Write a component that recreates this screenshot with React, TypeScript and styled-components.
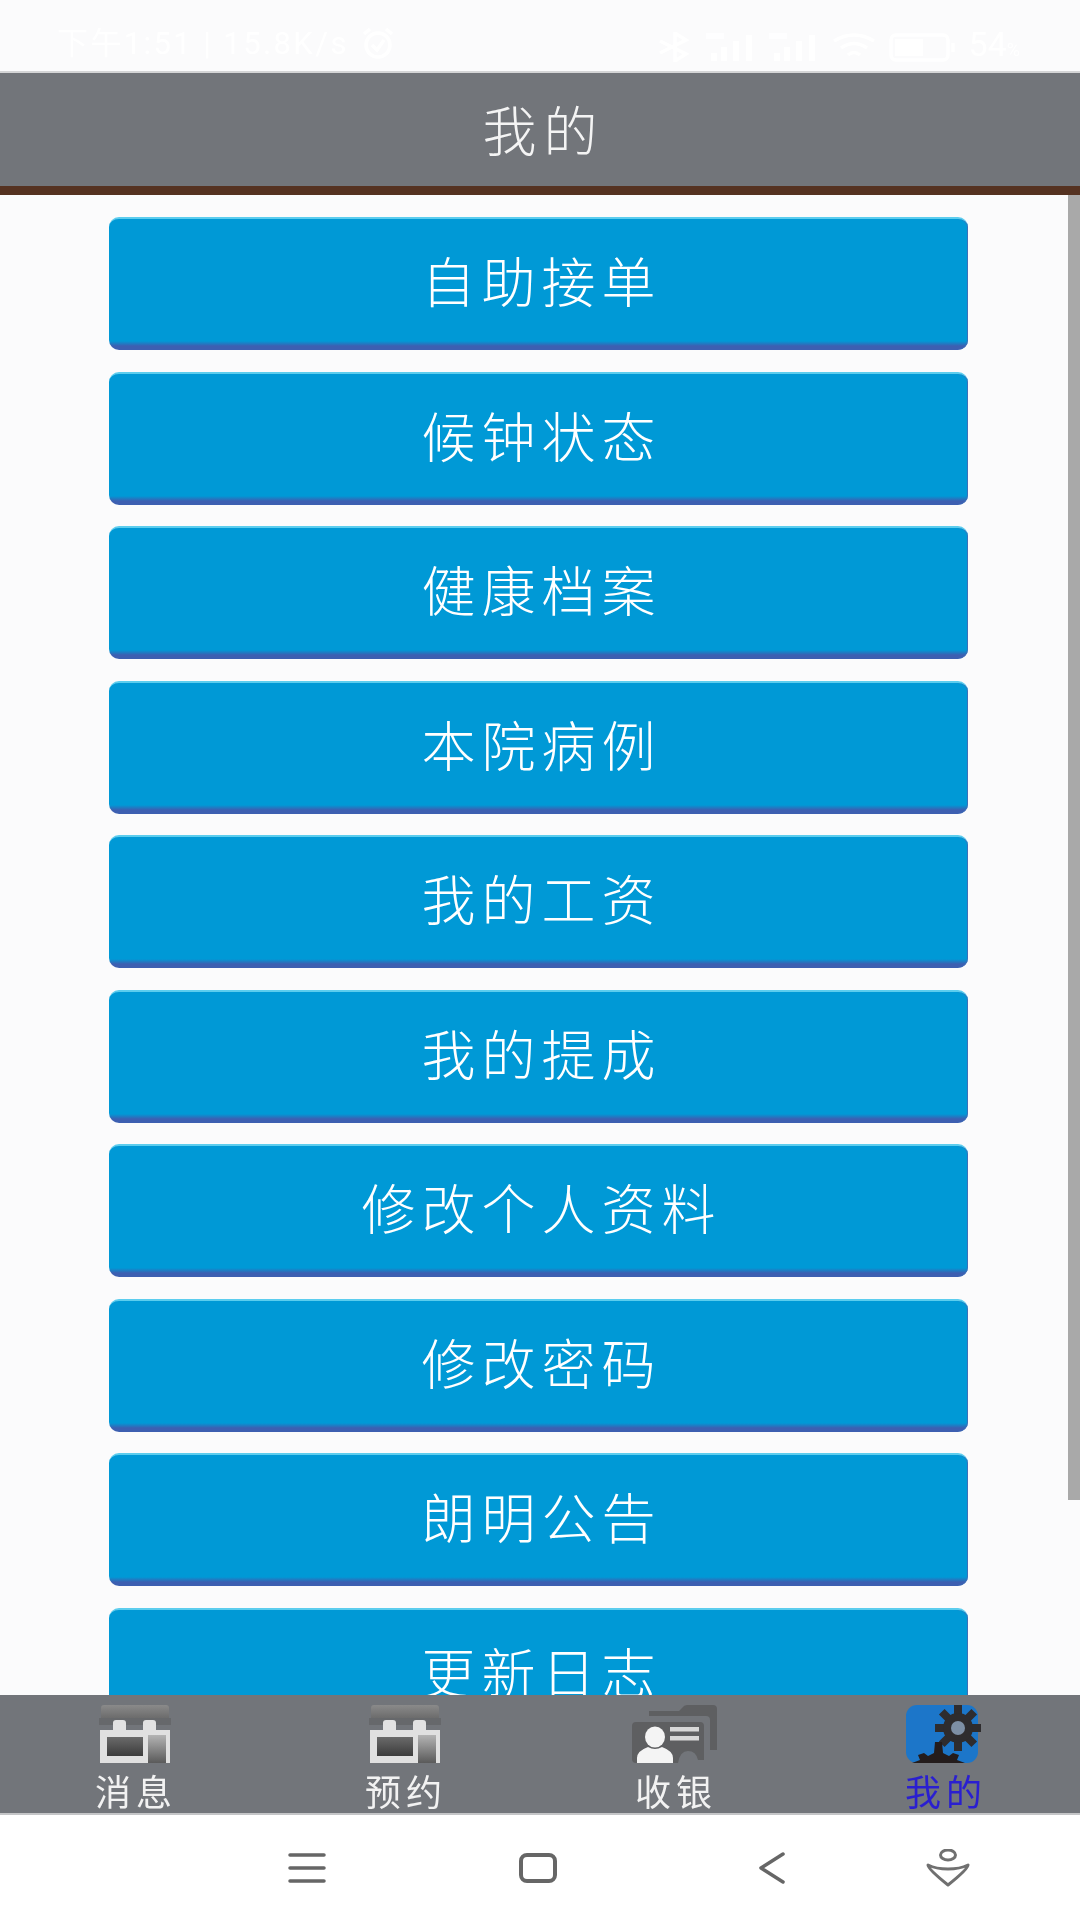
import React from 'react'
import styled, { createGlobalStyle } from 'styled-components'

const CJK = `"Noto Sans CJK SC", "Noto Sans", sans-serif`

const GlobalStyle = createGlobalStyle`
  html, body {
    margin: 0;
    padding: 0;
    background: #fbfbfc;
  }
  body {
    font-family: ${CJK};
  }
`

const Screen = styled.div`
  width: 1080px;
  height: 1920px;
  display: flex;
  flex-direction: column;
  overflow: hidden;
  background: #fbfbfc;
  filter: blur(0.6px);
`

const StatusBar = styled.div`
  height: 73px;
  flex: none;
  box-sizing: border-box;
  padding: 26px 60px 0 57px;
  display: flex;
  justify-content: space-between;
  align-items: flex-start;
  color: #ffffff;
  font-family: "Roboto", ${CJK};
  font-size: 31px;
  line-height: 36px;
  border-bottom: 2px solid #d4d5d6;
`

const StatusLeft = styled.div`
  display: flex;
  align-items: center;
  gap: 12px;
  letter-spacing: 2.4px;
`

const StatusRight = styled.div`
  display: flex;
  align-items: center;
  gap: 13px;
`

const Percent = styled.span`
  font-size: 34px;
  line-height: 36px;

  small {
    font-size: 18px;
  }
`

const Header = styled.header`
  flex: none;
  height: 122px;
  box-sizing: border-box;
  background: #72757a;
  border-bottom: 9px solid #553221;
  display: flex;
  align-items: center;
  justify-content: center;
  color: #f4f4f4;
  font-size: 54px;
  font-weight: 300;
  letter-spacing: 7px;
  padding: 0 0 2px 7px;
`

const Body = styled.div`
  position: relative;
  flex: 1;
  min-height: 0;
  overflow: hidden;
`

const ButtonList = styled.div`
  display: flex;
  flex-direction: column;
  gap: 21.5px;
  padding: 22px 112px 0 109px;
`

const MenuButton = styled.button`
  flex: none;
  height: 133px;
  border: 0;
  border-top: 2px solid #5ccdee;
  border-radius: 10px;
  background: linear-gradient(to bottom, #0099d6 0, #0099d6 122px, #3d5fb1 127px, #3d5fb1 100%);
  color: #ffffff;
  font-family: ${CJK};
  font-size: 54px;
  font-weight: 300;
  letter-spacing: 6px;
  padding: 0 0 10px 6px;
  box-shadow: inset -1px 0 0 #3d6fb8;
`

const Scrollbar = styled.div`
  position: absolute;
  top: 0;
  right: 0;
  width: 12px;
  height: 1305px;
  background: #a9a9a9;
`

const TabBar = styled.nav`
  flex: none;
  height: 120px;
  box-sizing: border-box;
  background: #72757a;
  border-bottom: 2px solid #c4c5c7;
  display: grid;
  grid-template-columns: repeat(4, 1fr);
`

const Tab = styled.div`
  display: flex;
  flex-direction: column;
  align-items: center;
  padding-top: 10px;
`

const TabIcon = styled.div`
  height: 60px;
  display: flex;
  align-items: flex-start;
  justify-content: center;
`

const TabLabel = styled.span<{ $active?: boolean }>`
  font-size: 36px;
  line-height: 40px;
  margin-top: 5px;
  letter-spacing: 5px;
  padding-left: 2px;
  color: ${props => (props.$active ? '#2a1fd0' : '#f2f2f2')};
`

const NavBar = styled.div`
  flex: none;
  height: 105px;
  background: #ffffff;
  display: grid;
  grid-template-columns: 288px 38px 193px 38px 202px 26px 141px 44px;
  align-items: center;
`

const NavSlot = styled.div<{ $column: number }>`
  grid-column: ${props => props.$column};
  display: flex;
  justify-content: center;
`

const items = [
  '自助接单',
  '候钟状态',
  '健康档案',
  '本院病例',
  '我的工资',
  '我的提成',
  '修改个人资料',
  '修改密码',
  '朗明公告',
  '更新日志',
]

const ShopIcon = () => (
  <svg width="72" height="58" viewBox="0 0 72 58">
    <defs>
      <linearGradient id="shopTop" x1="0" y1="0" x2="0" y2="1">
        <stop offset="0" stopColor="#8a8a8a" />
        <stop offset="1" stopColor="#6c6c6c" />
      </linearGradient>
      <linearGradient id="shopDark" x1="0" y1="0" x2="0" y2="1">
        <stop offset="0" stopColor="#6a6a6a" />
        <stop offset="1" stopColor="#3c3c3c" />
      </linearGradient>
      <linearGradient id="shopDoor" x1="0" y1="0" x2="0" y2="1">
        <stop offset="0" stopColor="#b4b4b4" />
        <stop offset="1" stopColor="#5a5a5a" />
      </linearGradient>
    </defs>
    <path d="M2 3 q0-3 3-3 h62 q3 0 3 3 v10 h-68z" fill="url(#shopTop)" />
    <path d="M0 13 h72 v7 h-72z" fill="#66686b" />
    <path d="M14 26 v-8 q0-3 3-3 h7 q3 0 3 3 v8z M44 26 v-8 q0-3 3-3 h7 q3 0 3 3 v8z" fill="#e2e2e2" />
    <rect x="1" y="25" width="70" height="33" fill="#e0e0e0" />
    <rect x="8" y="32" width="36" height="19" fill="url(#shopDark)" />
    <rect x="49" y="30" width="18" height="28" fill="url(#shopDoor)" />
  </svg>
)

const CardIcon = () => (
  <svg width="86" height="60" viewBox="0 0 86 60">
    <path d="M17 6 h30 l3-3 q2-3 5-3 h26 q4 0 4 4 v41 h-7 v-30 q0-4-4-4 h-57z" fill="#5e5f61" />
    <path d="M4 17 h64 q4 0 4 4 v34 h-6 q-2-9-10-9 q-8 0-10 12 h-42 q-4 0-4-4 v-33 q0-4 4-4z" fill="#5e5f61" />
    <ellipse cx="23" cy="32" rx="10" ry="10.5" fill="#f4f4f4" />
    <path d="M5 58 v-5 q0-7 11-11 q7 4 14 0 q11 4 11 11 v5z" fill="#f4f4f4" />
    <rect x="38" y="22" width="29" height="4.5" fill="#d8d8d8" />
    <rect x="38" y="31" width="29" height="4.5" fill="#d8d8d8" />
  </svg>
)

const GearIcon = () => (
  <svg width="78" height="60" viewBox="0 0 78 60" style={{ overflow: 'visible' }}>
    <rect x="0" y="0" width="72" height="58" rx="11" fill="#1c76c9" />
    <g transform="translate(52 23)" fill="#2e2c2e">
      {[0, 45, 90, 135].map(angle => (
        <rect key={angle} x="-4" y="-23" width="8" height="46" transform={`rotate(${angle})`} />
      ))}
      <circle r="15" />
      <circle r="7" fill="#7d8fa5" />
    </g>
    <path
      d="M6 58 l8-3 l-2-5 l6-2 l4 3 l6-3 l1-11 h7 l1 11 l6 3 l4-3 l6 2 l-2 5 l8 3z"
      fill="#241c1c"
    />
  </svg>
)

const MenuGlyph = () => (
  <svg width="38" height="30" viewBox="0 0 38 30" fill="none" stroke="#666" strokeWidth="3.5" strokeLinecap="round">
    <path d="M2 2 H36 M2 15 H36 M2 28 H36" />
  </svg>
)

const HomeGlyph = () => (
  <svg width="38" height="30" viewBox="0 0 38 30" fill="none" stroke="#666" strokeWidth="4">
    <rect x="2" y="2" width="34" height="26" rx="6" />
  </svg>
)

const BackGlyph = () => (
  <svg width="26" height="32" viewBox="0 0 26 32" fill="none" stroke="#666" strokeWidth="3.5" strokeLinecap="round" strokeLinejoin="round">
    <path d="M24 2 L2 16 L24 30" />
  </svg>
)

const AssistGlyph = () => (
  <svg width="44" height="38" viewBox="0 0 44 38" fill="none" stroke="#707070" strokeWidth="3" strokeLinejoin="round">
    <ellipse cx="22" cy="6" rx="7.5" ry="5" />
    <path d="M2 16 Q10 20 22 20 Q34 20 42 16 Q42 20 22 36 Q2 20 2 16 Z" />
  </svg>
)

const AlarmGlyph = () => (
  <svg width="34" height="34" viewBox="0 0 34 34" fill="none" stroke="#fff" strokeWidth="3.5">
    <circle cx="17" cy="18" r="12" />
    <path d="M11 18 L16 23 L23 13" />
    <path d="M3 7 L9 2 M31 7 L25 2" />
  </svg>
)

const BluetoothGlyph = () => (
  <svg width="35" height="30" viewBox="0 0 35 30" fill="none" stroke="#fff" strokeWidth="3.5">
    <path d="M2 9 L28 22 L17 29 V1 L28 8 L2 21" />
  </svg>
)

const SignalGlyph = () => (
  <svg width="50" height="28" viewBox="0 0 50 28" fill="#fff">
    <rect x="0" y="0" width="18" height="6" opacity="0.8" />
    <rect x="5" y="20" width="6" height="8" />
    <rect x="15" y="14" width="6" height="14" />
    <rect x="27" y="8" width="6" height="20" />
    <rect x="40" y="2" width="6" height="26" />
  </svg>
)

const WifiGlyph = () => (
  <svg width="44" height="30" viewBox="0 0 44 30" fill="none" stroke="#fff" strokeWidth="3.5">
    <path d="M2 9 Q22 -3 42 9 M9 16 Q22 7 35 16 M16 23 Q22 18 28 23" />
  </svg>
)

const BatteryGlyph = () => (
  <svg width="67" height="30" viewBox="0 0 67 30" fill="none" stroke="#fff" strokeWidth="3.5">
    <rect x="2" y="3" width="57" height="25" rx="5" />
    <rect x="6" y="7" width="28" height="17" fill="#fff" stroke="none" />
    <path d="M64 11 V20" />
  </svg>
)

export default function App() {
  return (
    <>
      <GlobalStyle />
      <Screen>
        <StatusBar>
          <StatusLeft>
            <span>下午1:51 | 15.8K/s</span>
            <AlarmGlyph />
          </StatusLeft>
          <StatusRight>
            <BluetoothGlyph />
            <SignalGlyph />
            <SignalGlyph />
            <WifiGlyph />
            <BatteryGlyph />
            <Percent>54<small>%</small></Percent>
          </StatusRight>
        </StatusBar>
        <Header>我的</Header>
        <Body>
          <ButtonList>
            {items.map(item => (
              <MenuButton key={item}>{item}</MenuButton>
            ))}
          </ButtonList>
          <Scrollbar />
        </Body>
        <TabBar>
          <Tab>
            <TabIcon><ShopIcon /></TabIcon>
            <TabLabel>消息</TabLabel>
          </Tab>
          <Tab>
            <TabIcon><ShopIcon /></TabIcon>
            <TabLabel>预约</TabLabel>
          </Tab>
          <Tab>
            <TabIcon><CardIcon /></TabIcon>
            <TabLabel>收银</TabLabel>
          </Tab>
          <Tab>
            <TabIcon><GearIcon /></TabIcon>
            <TabLabel $active>我的</TabLabel>
          </Tab>
        </TabBar>
        <NavBar>
          <NavSlot $column={2}><MenuGlyph /></NavSlot>
          <NavSlot $column={4}><HomeGlyph /></NavSlot>
          <NavSlot $column={6}><BackGlyph /></NavSlot>
          <NavSlot $column={8}><AssistGlyph /></NavSlot>
        </NavBar>
      </Screen>
    </>
  )
}
